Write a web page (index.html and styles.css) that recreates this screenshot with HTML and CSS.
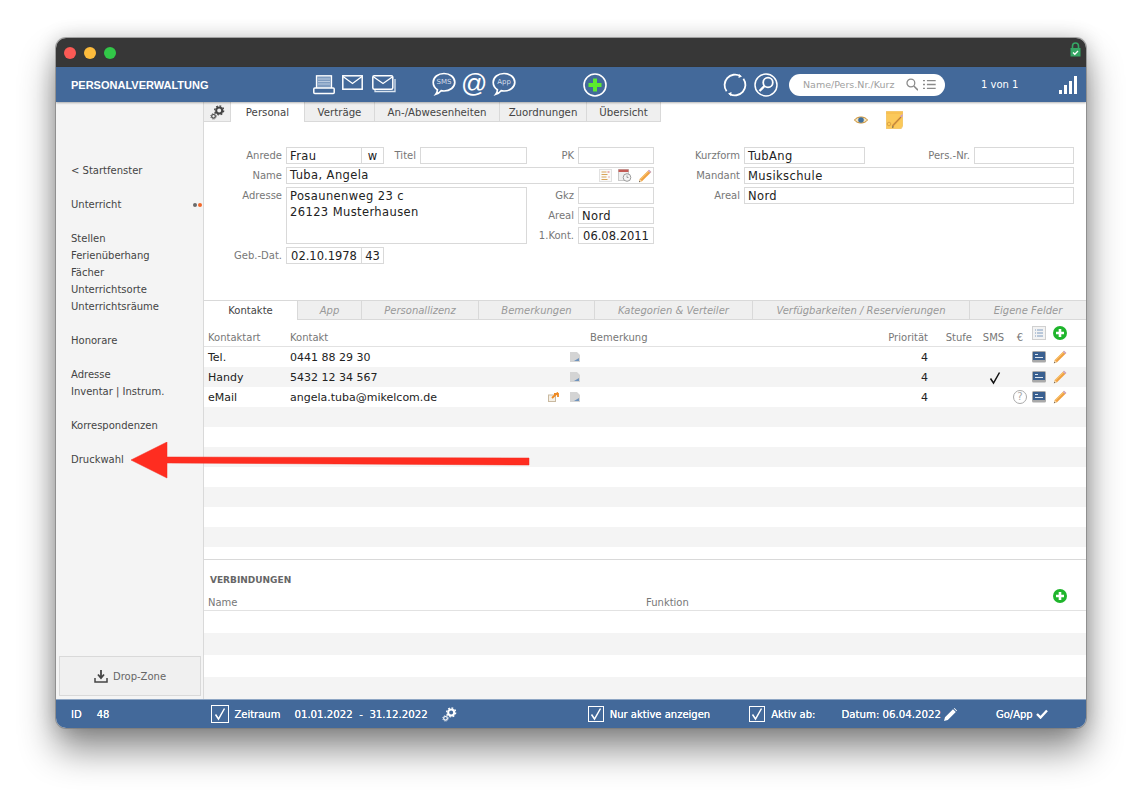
FILE: index.html
```html
<!DOCTYPE html>
<html lang="de">
<head>
    <meta charset="UTF-8">
    <meta name="viewport" content="width=device-width, initial-scale=1.0">
    <title>Personalverwaltung</title>
    <link rel="stylesheet" href="styles.css">
</head>
<body>

<svg class="defs" width="0" height="0">
    <symbol id="gears" viewBox="0 0 18 18">
        <circle cx="11" cy="6.5" r="3.6" fill="none" stroke="currentColor" stroke-width="2.4"/>
        <circle cx="11" cy="6.5" r="5.4" fill="none" stroke="currentColor" stroke-width="1.6" stroke-dasharray="2.2 2"/>
        <circle cx="4.2" cy="13.6" r="2.2" fill="none" stroke="currentColor" stroke-width="1.4"/>
        <circle cx="4.2" cy="13.6" r="3.3" fill="none" stroke="currentColor" stroke-width="1" stroke-dasharray="1.3 1.3"/>
    </symbol>
    <symbol id="pencil" viewBox="0 0 16 16">
        <path d="M1 15l.9-3.600L12.600.8l2.600 2.600L4.600 14z" fill="#f0a040"/>
        <path d="M2.400 11L12.800 1l.8.8L3.200 12z" fill="#f8c878"/>
        <path d="M12.600.8l2.600 2.600-1.300 1.300-2.600-2.600z" fill="#c8a8d8"/>
        <path d="M1 15l.9-3.600L4.600 14z" fill="#f3dcb4"/>
        <path d="M1 15l.4-1.700 1.300 1.300z" fill="#555"/>
    </symbol>
    <symbol id="monitor" viewBox="0 0 14 12">
        <rect x="0" y="0" width="14" height="11.500" rx="1.500" fill="#a9a9a9"/>
        <rect x="1" y="1" width="12" height="8" fill="#3a6090"/>
        <path d="M3 3.500h3M3 6.500h8" stroke="#dfe8f2" stroke-width="1"/>
    </symbol>
    <symbol id="note-edit" viewBox="0 0 10 10">
        <path d="M0 0h7l3 3v7H0z" fill="#d4d4d4"/>
        <path d="M4 9l5-3v3z" fill="#6f93bd"/>
    </symbol>
    <symbol id="round-plus" viewBox="0 0 14 14">
        <circle cx="7" cy="7" r="7" fill="#1fb52c"/>
        <path d="M7 3v8M3 7h8" stroke="#fff" stroke-width="2.600"/>
    </symbol>
    <symbol id="bubble" viewBox="0 0 24 24">
        <path d="M12 1.500c6 0 10.800 3.800 10.800 8.800S18 19 12 19c-1 0-2-.1-2.900-.3-1.200 1.500-3 2.900-5.300 3.600 1-1.300 1.500-2.700 1.600-4.600C2.900 16.200 1.200 13.500 1.200 10.300 1.200 5.300 6 1.500 12 1.500z" fill="none" stroke="#fff" stroke-width="1.700"/>
    </symbol>
    <symbol id="tick" viewBox="0 0 14 14">
        <path d="M2.500 7.500L5.500 12 11.500 1.500" fill="none" stroke="currentColor" stroke-width="1.500"/>
    </symbol>
</svg>

<div class="window">
    <div class="titlebar">
        <span class="light red"></span>
        <span class="light yellow"></span>
        <span class="light green"></span>
        <svg class="lock" width="11" height="15" viewBox="0 0 11 15">
            <path d="M2.500 7V4a3 3 0 0 1 6 0v3" fill="none" stroke="#35a765" stroke-width="1.600"/>
            <rect x="0.500" y="6" width="10" height="8.500" fill="#35a765"/>
            <path d="M3 10.500l1.800 1.800L8 9" fill="none" stroke="#fff" stroke-width="1.300"/>
        </svg>
    </div>

    <header class="appbar">
        <div class="app-title">PERSONALVERWALTUNG</div>
        <svg class="bar-icon printer" width="22" height="20" viewBox="0 0 22 20">
            <rect x="3.500" y="0.800" width="15" height="13" fill="#7f9cc0" stroke="#fff" stroke-width="1.300"/>
            <path d="M5 4h12M5 6.500h12M5 9h12" stroke="#b9cadf" stroke-width="1"/>
            <rect x="0.800" y="13" width="20.400" height="5.500" rx="1" fill="#43699a" stroke="#fff" stroke-width="1.500"/>
        </svg>
        <svg class="bar-icon env" width="21" height="15" viewBox="0 0 21 15">
            <rect x="0.800" y="0.800" width="19.400" height="13.400" fill="none" stroke="#fff" stroke-width="1.500"/>
            <path d="M1 1.500l9.500 7 9.500-7" fill="none" stroke="#fff" stroke-width="1.300"/>
        </svg>
        <svg class="bar-icon envs" width="25" height="18" viewBox="0 0 25 18">
            <path d="M3 14v2.500h20V4" fill="none" stroke="#dbe5f0" stroke-width="1.300"/>
            <rect x="0.800" y="0.800" width="20" height="13.400" rx="1.500" fill="#43699a" stroke="#fff" stroke-width="1.500"/>
            <path d="M1 1.500l10 7 10-7" fill="none" stroke="#fff" stroke-width="1.300"/>
        </svg>
        <div class="bubble sms">
            <svg width="24" height="24"><use href="#bubble"/></svg>
            <span>SMS</span>
        </div>
        <span class="at-sign">@</span>
        <div class="bubble app">
            <svg width="24" height="24"><use href="#bubble"/></svg>
            <span>App</span>
        </div>
        <svg class="bar-icon add" width="24" height="24" viewBox="0 0 24 24">
            <circle cx="12" cy="12" r="11" fill="#43699a" stroke="#fff" stroke-width="1.600"/>
            <path d="M12 5.500v13M5.500 12h13" stroke="#5bea2d" stroke-width="4"/>
        </svg>
        <svg class="bar-icon sync" width="24" height="24" viewBox="0 0 24 24">
            <path d="M3.600 18.300A10.500 10.500 0 0 1 17.300 3" fill="none" stroke="#fff" stroke-width="1.800"/>
            <path d="M20.400 5.700A10.500 10.500 0 0 1 6.700 21" fill="none" stroke="#fff" stroke-width="1.800"/>
            <path d="M16 1l3 2.500-3.500 1.500zM8 23l-3-2.500 3.500-1.500z" fill="#fff"/>
        </svg>
        <svg class="bar-icon find" width="24" height="24" viewBox="0 0 24 24">
            <circle cx="12" cy="12" r="11" fill="none" stroke="#fff" stroke-width="1.500"/>
            <circle cx="14" cy="9.500" r="4.800" fill="none" stroke="#fff" stroke-width="1.800"/>
            <path d="M10.500 13L5.500 18" stroke="#fff" stroke-width="2.400"/>
        </svg>
        <div class="search">
            <span class="search-text">Name/Pers.Nr./Kurz</span>
            <svg width="13" height="13" viewBox="0 0 13 13">
                <circle cx="5" cy="5" r="4" fill="none" stroke="#8a8a8a" stroke-width="1.300"/>
                <path d="M8 8l4.300 4.300" stroke="#8a8a8a" stroke-width="1.600"/>
            </svg>
            <svg width="13" height="11" viewBox="0 0 13 11">
                <path d="M0 1.500h2M4 1.500h9M0 5.500h2M4 5.500h9M0 9.500h2M4 9.500h9" stroke="#8a8a8a" stroke-width="1.300"/>
            </svg>
        </div>
        <div class="counter">1 von 1</div>
        <div class="signal">
            <i class="s1"></i><i class="s2"></i><i class="s3"></i><i class="s4"></i>
        </div>
    </header>

    <div class="body">
        <aside class="sidebar">
            <nav class="side-nav">
                <div class="side-group"><a>&lt; Startfenster</a></div>
                <div class="side-group">
                    <a>Unterricht<span class="dots"><i class="dot-grey"></i><i class="dot-orange"></i></span></a>
                </div>
                <div class="side-group">
                    <a>Stellen</a>
                    <a>Ferienüberhang</a>
                    <a>Fächer</a>
                    <a>Unterrichtsorte</a>
                    <a>Unterrichtsräume</a>
                </div>
                <div class="side-group"><a>Honorare</a></div>
                <div class="side-group">
                    <a>Adresse</a>
                    <a>Inventar | Instrum.</a>
                </div>
                <div class="side-group"><a>Korrespondenzen</a></div>
                <div class="side-group"><a>Druckwahl</a></div>
            </nav>
            <div class="dropzone">
                <svg width="14" height="14" viewBox="0 0 14 14">
                    <path d="M7 1v7M4 5.500L7 9l3-3.500" fill="none" stroke="#444" stroke-width="1.800"/>
                    <path d="M1 9v4h12V9" fill="none" stroke="#444" stroke-width="1.500"/>
                </svg>
                <span>Drop-Zone</span>
            </div>
        </aside>

        <main class="main">
            <div class="top-tabs">
                <div class="tab gear-tab"><svg width="15" height="15"><use href="#gears"/></svg></div>
                <div class="tab active w74">Personal</div>
                <div class="tab w70">Verträge</div>
                <div class="tab w125">An-/Abwesenheiten</div>
                <div class="tab w87">Zuordnungen</div>
                <div class="tab w74">Übersicht</div>
                <div class="top-tools">
                    <svg width="14" height="10" viewBox="0 0 14 10">
                        <path d="M.5 5C3 1 11 1 13.500 5 11 9 3 9 .5 5z" fill="#f0e2c0" stroke="#c98a28" stroke-width="1"/>
                        <circle cx="7" cy="5" r="2.800" fill="#41709c"/>
                    </svg>
                    <svg class="sticky" width="17" height="18" viewBox="0 0 17 18">
                        <path d="M0 0h17v15l-2 3H0z" fill="#fbc95a" stroke="#e7c998" stroke-width=".6"/>
                        <path d="M0 2h17" stroke="#f4b84a" stroke-width="1"/>
                        <path d="M6.500 15L15 6" stroke="#e8a040" stroke-width="2"/>
                        <path d="M6.500 15L15 6" stroke="#8a6a3c" stroke-width=".6"/>
                        <path d="M14 5l3-2-1 3.500z" fill="#c79ad0"/>
                        <path d="M6.500 15l-.5 2 2-1z" fill="#555"/>
                        <circle cx="3" cy="13" r="1.800" fill="none" stroke="#d49a40" stroke-width=".8"/>
                    </svg>
                </div>
            </div>

            <section class="person">
                <div class="person-left">
                    <div class="row">
                        <label class="lbl l-main">Anrede</label>
                        <div class="field w76">Frau</div>
                        <div class="field w23 center">w</div>
                        <label class="lbl l-titel">Titel</label>
                        <div class="field w107"></div>
                        <label class="lbl l-pk">PK</label>
                        <div class="field w76"></div>
                    </div>
                    <div class="row">
                        <label class="lbl l-main">Name</label>
                        <div class="field w368 name-field">
                            <span>Tuba, Angela</span>
                            <span class="field-icons">
                                <svg width="13" height="13" viewBox="0 0 13 13">
                                    <rect x=".5" y=".5" width="12" height="12" fill="#fafafa" stroke="#e2e2e2"/>
                                    <path d="M2.500 3h5M2.500 5.500h6M2.500 8h5M2.500 10.500h6" stroke="#d9a45a"/>
                                    <path d="M8.500 3h2M9.500 8h1" stroke="#d66"/>
                                </svg>
                                <svg width="14" height="13" viewBox="0 0 14 13">
                                    <rect x=".5" y=".5" width="10" height="11" fill="#eee" stroke="#c9c9c9"/>
                                    <rect x=".5" y=".5" width="10" height="2.500" fill="#c45b55"/>
                                    <circle cx="9" cy="8.500" r="3.800" fill="#f4f4f4" stroke="#9a9a9a"/>
                                    <path d="M9 6.500v2h1.500" fill="none" stroke="#8a8a8a" stroke-width=".8"/>
                                </svg>
                                <svg width="14" height="14"><use href="#pencil"/></svg>
                            </span>
                        </div>
                    </div>
                    <div class="row address-row">
                        <label class="lbl l-main">Adresse</label>
                        <div class="field textarea">Posaunenweg 23 c<br>26123 Musterhausen</div>
                        <div class="address-side">
                            <div class="row">
                                <label class="lbl l-pk">Gkz</label>
                                <div class="field w76"></div>
                            </div>
                            <div class="row">
                                <label class="lbl l-pk">Areal</label>
                                <div class="field w76">Nord</div>
                            </div>
                            <div class="row">
                                <label class="lbl l-pk">1.Kont.</label>
                                <div class="field w76 center">06.08.2011</div>
                            </div>
                        </div>
                    </div>
                    <div class="row">
                        <label class="lbl l-main">Geb.-Dat.</label>
                        <div class="field w76 center">02.10.1978</div>
                        <div class="field w23 center">43</div>
                    </div>
                </div>

                <div class="person-right">
                    <div class="row">
                        <label class="lbl l-kurz">Kurzform</label>
                        <div class="field w121">TubAng</div>
                        <label class="lbl l-pers">Pers.-Nr.</label>
                        <div class="field w100"></div>
                    </div>
                    <div class="row">
                        <label class="lbl l-kurz">Mandant</label>
                        <div class="field w330">Musikschule</div>
                    </div>
                    <div class="row">
                        <label class="lbl l-kurz">Areal</label>
                        <div class="field w330">Nord</div>
                    </div>
                </div>
            </section>

            <div class="sub-tabs">
                <div class="stab active s94">Kontakte</div>
                <div class="stab s64">App</div>
                <div class="stab s117">Personallizenz</div>
                <div class="stab s116">Bemerkungen</div>
                <div class="stab s158">Kategorien &amp; Verteiler</div>
                <div class="stab s217">Verfügbarkeiten / Reservierungen</div>
                <div class="stab last">Eigene Felder</div>
            </div>

            <div class="contacts">
                <div class="c-row c-head">
                    <div>Kontaktart</div>
                    <div>Kontakt</div>
                    <div>Bemerkung</div>
                    <div class="right">Priorität</div>
                    <div class="right">Stufe</div>
                    <div class="center head-sms">SMS</div>
                    <div class="center head-euro">€</div>
                    <div class="c-tools">
                        <svg width="14" height="14" viewBox="0 0 14 14">
                            <rect x=".5" y=".5" width="13" height="13" fill="#f3f3f3" stroke="#d0d0d0"/>
                            <path d="M3 4h1M5 4h6M3 7h1M5 7h6M3 10h1M5 10h6" stroke="#7f9cc0"/>
                        </svg>
                        <svg width="14" height="14"><use href="#round-plus"/></svg>
                    </div>
                </div>
                <div class="c-rows">
                    <div class="c-row">
                        <div>Tel.</div>
                        <div class="c-contact">0441 88 29 30<span class="c-icons"><svg width="10" height="10"><use href="#note-edit"/></svg></span></div>
                        <div></div>
                        <div class="right">4</div>
                        <div></div><div></div><div></div>
                        <div class="c-tools">
                            <svg width="14" height="12"><use href="#monitor"/></svg>
                            <svg width="14" height="14"><use href="#pencil"/></svg>
                        </div>
                    </div>
                    <div class="c-row">
                        <div>Handy</div>
                        <div class="c-contact">5432 12 34 567<span class="c-icons"><svg width="10" height="10"><use href="#note-edit"/></svg></span></div>
                        <div></div>
                        <div class="right">4</div>
                        <div></div>
                        <div class="center sms-tick"><svg width="14" height="14"><use href="#tick"/></svg></div>
                        <div></div>
                        <div class="c-tools">
                            <svg width="14" height="12"><use href="#monitor"/></svg>
                            <svg width="14" height="14"><use href="#pencil"/></svg>
                        </div>
                    </div>
                    <div class="c-row">
                        <div>eMail</div>
                        <div class="c-contact">angela.tuba@mikelcom.de<span class="c-icons">
                            <svg class="mail-flag" width="11" height="10" viewBox="0 0 11 10">
                                <rect x=".5" y="3" width="7" height="6.500" fill="#f5f0e6" stroke="#c9b9a0"/>
                                <path d="M4 6l6-5.500M6 2h4v3" fill="none" stroke="#ef8a22" stroke-width="1.800"/>
                            </svg>
                            <svg width="10" height="10"><use href="#note-edit"/></svg></span></div>
                        <div></div>
                        <div class="right">4</div>
                        <div></div><div></div>
                        <div><span class="question">?</span></div>
                        <div class="c-tools">
                            <svg width="14" height="12"><use href="#monitor"/></svg>
                            <svg width="14" height="14"><use href="#pencil"/></svg>
                        </div>
                    </div>
                    <div class="c-row"></div>
                    <div class="c-row"></div>
                    <div class="c-row"></div>
                    <div class="c-row"></div>
                    <div class="c-row"></div>
                    <div class="c-row"></div>
                    <div class="c-row"></div>
                </div>
            </div>

            <section class="links">
                <h4>VERBINDUNGEN</h4>
                <div class="links-head">
                    <span class="links-name">Name</span>
                    <span>Funktion</span>
                    <svg width="14" height="14"><use href="#round-plus"/></svg>
                </div>
                <div class="links-rows">
                    <div></div>
                    <div></div>
                    <div></div>
                    <div></div>
                </div>
            </section>
        </main>
    </div>

    <footer class="statusbar">
        <span class="id-label">ID</span>
        <span class="id-value">48</span>
        <span class="check zeit-check"><svg width="14" height="14"><use href="#tick"/></svg></span>
        <span class="zeit-label">Zeitraum</span>
        <span class="zeit-range">01.01.2022&nbsp; - &nbsp;31.12.2022</span>
        <svg class="zeit-gear" width="15" height="15"><use href="#gears"/></svg>
        <span class="check aktive-check"><svg width="14" height="14"><use href="#tick"/></svg></span>
        <span class="aktive-label">Nur aktive anzeigen</span>
        <span class="check ab-check"><svg width="14" height="14"><use href="#tick"/></svg></span>
        <span class="ab-label">Aktiv ab:</span>
        <span class="datum">Datum: 06.04.2022</span>
        <svg class="datum-pen" width="13" height="13" viewBox="0 0 13 13">
            <path d="M0 13l1-3.800L9 1.200 11.800 4 3.800 12zM9.800.5l.7-.5L13 2.500l-.5.700z" fill="#fff"/>
        </svg>
        <span class="goapp">Go/App</span>
        <svg class="goapp-tick" width="12" height="10" viewBox="0 0 12 10">
            <path d="M1 5l3.500 3.500L11 1.500" fill="none" stroke="#fff" stroke-width="2.400"/>
        </svg>
    </footer>

    <svg class="arrow" width="400" height="37" viewBox="0 0 400 37">
        <path d="M0 18L36 0V15L398 16V23L36 21V36z" fill="#ff2d20" stroke="#f32a1e" stroke-width=".5"/>
    </svg>
</div>

</body>
</html>
```

FILE: styles.css
```css
* {
    box-sizing: border-box;
}

body {
    margin: 0;
    padding: 38px 56px 0;
    height: 802px;
    overflow: hidden;
    background: #fff;
    font-family: "DejaVu Sans", Verdana, sans-serif;
    font-size: 10px;
    color: #555;
}

.defs {
    position: absolute;
}

.window {
    position: relative;
    width: 1030px;
    height: 690px;
    border-radius: 10px;
    background: #fff;
    box-shadow: 0 0 0 1px rgba(120, 120, 120, 0.6), 0 22px 36px rgba(0, 0, 0, 0.45), 0 0 20px rgba(0, 0, 0, 0.2);
    display: flex;
    flex-direction: column;
    overflow: hidden;
}

/* title bar */
.titlebar {
    height: 29px;
    flex: none;
    background: #373737;
    display: flex;
    align-items: center;
    padding-left: 8px;
    gap: 8px;
}

.light {
    width: 12px;
    height: 12px;
    border-radius: 50%;
}

.red { background: #fb5a55; }
.yellow { background: #fdbb3c; }
.green { background: #32c748; }

.lock {
    margin-left: auto;
    margin-right: 5px;
    margin-top: -7px;
}

/* blue bar */
.appbar {
    height: 35px;
    flex: none;
    background: #43699a;
    color: #fff;
    display: flex;
    align-items: center;
    box-shadow: 0 1px 2px rgba(0, 0, 0, 0.3);
    position: relative;
    z-index: 1;
}

.app-title {
    width: 257px;
    padding-left: 15px;
    font-family: "Liberation Sans", Arial, sans-serif;
    font-weight: 700;
    font-size: 11px;
    white-space: nowrap;
}

.bar-icon {
    flex: none;
}

.env { margin-left: 7px; margin-top: -4px; }
.envs { margin-left: 9px; margin-top: -2px; }

.bubble {
    position: relative;
    width: 24px;
    height: 24px;
    margin-top: -2px;
}

.bubble span {
    position: absolute;
    left: 0;
    right: 0;
    top: 6px;
    text-align: center;
    font-size: 7px;
    line-height: 9px;
    color: #d5deea;
}

.sms { margin-left: 35px; }
.app { margin-left: 7px; }

.at-sign {
    width: 24px;
    margin-left: 5px;
    margin-top: -4px;
    font-family: "Liberation Sans", Arial, sans-serif;
    font-size: 26px;
    line-height: 30px;
    text-align: center;
}

.add { margin-left: 67px; }
.sync { margin-left: 116px; }
.find { margin-left: 7px; }

.search {
    width: 156px;
    height: 22px;
    margin-left: 11px;
    border-radius: 11px;
    background: #fff;
    display: flex;
    align-items: center;
    padding: 0 9px 0 14px;
    gap: 5px;
}

.search-text {
    width: 100px;
    font-size: 9.500px;
    color: #a0a0a0;
    white-space: nowrap;
}

.counter {
    width: 38px;
    margin-left: 36px;
    font-size: 10px;
    white-space: nowrap;
}

.signal {
    display: flex;
    align-items: flex-end;
    gap: 2px;
    height: 18px;
    margin-left: 40px;
    margin-top: 1px;
}

.signal i {
    width: 3px;
    background: #fff;
}

.s1 { height: 4px; }
.s2 { height: 9px; }
.s3 { height: 13px; }
.s4 { height: 18px; }

/* layout */
.body {
    flex: 1;
    display: flex;
    min-height: 0;
}

.sidebar {
    width: 148px;
    flex: none;
    background: #f4f4f4;
    border-right: 1px solid #d9d9d9;
    display: flex;
    flex-direction: column;
    justify-content: space-between;
    padding: 60px 0 3px 3px;
}

.side-nav {
    display: flex;
    flex-direction: column;
    gap: 17px;
}

.side-group a {
    display: flex;
    align-items: center;
    height: 17px;
    padding-left: 12px;
    color: #444;
    font-size: 10px;
    white-space: nowrap;
}

.dots {
    margin-left: auto;
    margin-right: 1px;
    display: flex;
    gap: 1px;
}

.dots i {
    width: 4px;
    height: 4px;
    border-radius: 50%;
}

.dot-grey { background: #6a6a6a; }
.dot-orange { background: #f2682a; }

.dropzone {
    width: 142px;
    height: 40px;
    background: #f0f0f0;
    border: 1px solid #d9d9d9;
    display: flex;
    align-items: center;
    justify-content: center;
    gap: 5px;
    color: #666;
    font-size: 10px;
}

.main {
    flex: 1;
    min-width: 0;
    display: flex;
    flex-direction: column;
}

/* top tabs */
.top-tabs {
    display: flex;
    height: 20px;
    flex: none;
}

.tab {
    height: 20px;
    padding-top: 1px;
    background: #efefef;
    border-right: 1px solid #d9d9d9;
    border-bottom: 1px solid #d9d9d9;
    display: flex;
    align-items: center;
    justify-content: center;
    color: #444;
    font-size: 10.200px;
    white-space: nowrap;
}

.tab.active {
    background: #fff;
    border-bottom: 0;
}

.gear-tab { width: 27px; color: #444; }
.w74 { width: 74px; }
.w70 { width: 70px; }
.w125 { width: 125px; }
.w87 { width: 87px; }

.top-tools {
    display: flex;
    align-items: center;
    gap: 18px;
    height: 18px;
    margin: 9px 0 0 193px;
}

/* person form */
.person {
    flex: none;
    height: 178px;
    padding-top: 25px;
    display: flex;
}

.row {
    display: flex;
    height: 17px;
    margin-bottom: 3px;
}

.lbl {
    padding-right: 4px;
    line-height: 18px;
    text-align: right;
    color: #777;
    font-size: 10px;
    white-space: nowrap;
}

.l-main { width: 82px; }
.l-titel { width: 36px; }
.l-pk { width: 51px; }
.l-kurz { width: 90px; }
.l-pers { width: 109px; }

.field {
    height: 17px;
    border: 1px solid #d9d9d9;
    padding: 1px 3px 0;
    line-height: 15px;
    color: #222;
    font-size: 11.500px;
    white-space: nowrap;
    letter-spacing: 0.4px;
}

.center {
    text-align: center;
    padding: 1px 0 0;
    letter-spacing: 0;
}

.w76 { width: 76px; }
.w23 { width: 23px; margin-left: -1px; }
.w107 { width: 107px; }
.w121 { width: 121px; }
.w100 { width: 100px; }
.w330 { width: 330px; }
.w368 { width: 368px; }

.name-field {
    display: flex;
    justify-content: space-between;
    align-items: center;
    padding: 0 1px 0 3px;
}

.field-icons {
    display: flex;
    align-items: center;
    gap: 6px;
}

.address-row {
    height: 57px;
}

.textarea {
    width: 241px;
    height: 57px;
    padding-top: 0;
    line-height: 16px;
    white-space: normal;
}

.address-side {
    display: flex;
    flex-direction: column;
}

.person-left {
    width: 450px;
    flex: none;
}

/* lower tabs */
.sub-tabs {
    display: flex;
    height: 20px;
    flex: none;
    border-top: 1px solid #d9d9d9;
}

.stab {
    height: 19px;
    background: #efefef;
    border-right: 1px solid #d9d9d9;
    border-bottom: 1px solid #d9d9d9;
    display: flex;
    align-items: center;
    justify-content: center;
    font-style: italic;
    font-size: 10px;
    color: #999;
    white-space: nowrap;
}

.stab.active {
    background: #fff;
    border-bottom: 0;
    font-style: normal;
    color: #444;
}

.s94 { width: 94px; }
.s64 { width: 64px; }
.s117 { width: 117px; }
.s116 { width: 116px; }
.s158 { width: 158px; }
.s217 { width: 217px; }
.last { flex: 1; border-right: 0; }

/* contact table */
.contacts {
    flex: none;
    height: 240px;
    border-bottom: 1px solid #d9d9d9;
    overflow: hidden;
}

.c-row {
    display: grid;
    grid-template-columns: 82px 300px 294px 44px 44px 40px 18px 1fr;
    height: 20px;
    align-items: center;
    padding-left: 4px;
    color: #222;
    font-size: 11px;
}

.c-head {
    height: 27px;
    padding-top: 9px;
    border-bottom: 1px solid #e2e2e2;
    color: #777;
    font-size: 10px;
}

.head-sms { padding: 0 0 0 3px; }
.head-euro { padding: 0 2px 0 0; }

.right { text-align: right; }

.c-rows .c-row:nth-child(even) {
    background: #f4f4f4;
}

.c-contact {
    display: flex;
    justify-content: space-between;
    padding-right: 10px;
}

.c-icons {
    display: flex;
    align-items: center;
    gap: 11px;
}

.c-tools {
    display: flex;
    align-items: center;
    gap: 7px;
    padding-left: 2px;
}

.c-head .c-tools {
    margin-top: -9px;
}

.sms-tick {
    color: #111;
    padding-left: 6px;
    display: flex;
    justify-content: center;
}

.question {
    display: block;
    width: 14px;
    height: 14px;
    margin-left: 1px;
    border: 1px solid #aaa;
    border-radius: 50%;
    color: #aaa;
    font-size: 10px;
    line-height: 12px;
    text-align: center;
}

/* Verbindungen */
.links {
    flex: 1;
    min-height: 0;
    display: flex;
    flex-direction: column;
}

.links h4 {
    margin: 14px 0 0 6px;
    font-size: 9px;
    line-height: 12px;
    font-weight: 700;
    color: #666;
}

.links-head {
    display: flex;
    align-items: flex-end;
    height: 25px;
    padding: 0 19px 0 4px;
    border-bottom: 1px solid #e2e2e2;
    line-height: 14px;
    color: #777;
    font-size: 10px;
}

.links-name {
    width: 438px;
}

.links-head svg {
    margin: 0 0 7px auto;
}

.links-rows {
    flex: 1;
    display: grid;
    grid-template-rows: repeat(4, 1fr);
}

.links-rows div:nth-child(even) {
    background: #f4f4f4;
}

/* footer */
.statusbar {
    height: 29px;
    flex: none;
    background: #43699a;
    border-top: 1px solid #8ea6c4;
    color: #fff;
    display: flex;
    align-items: center;
    font-size: 10px;
    white-space: nowrap;
    text-shadow: 0 0 0.5px #fff;
}

.check {
    width: 18px;
    height: 18px;
    border: 1px solid #fff;
    display: flex;
    align-items: center;
    justify-content: center;
    color: #fff;
    flex: none;
}

.id-label { margin-left: 15px; }
.id-value { margin-left: 15px; }
.zeit-check { margin-left: 102px; }
.zeit-label { margin-left: 5px; }
.zeit-range { margin-left: 14px; font-size: 10.200px; }
.zeit-gear { margin-left: 14px; }
.aktive-check { margin-left: 131px; width: 16px; height: 16px; }
.aktive-label { margin-left: 6px; }
.ab-check { margin-left: 39px; width: 16px; height: 16px; }
.ab-label { margin-left: 6px; }
.datum { margin-left: 26px; font-size: 10.200px; }
.datum-pen { margin-left: 3px; }
.goapp { margin-left: 39px; }
.goapp-tick { margin-left: 3px; }

/* red annotation arrow lying over the window */
.arrow {
    position: absolute;
    left: 75px;
    top: 404px;
}
```
